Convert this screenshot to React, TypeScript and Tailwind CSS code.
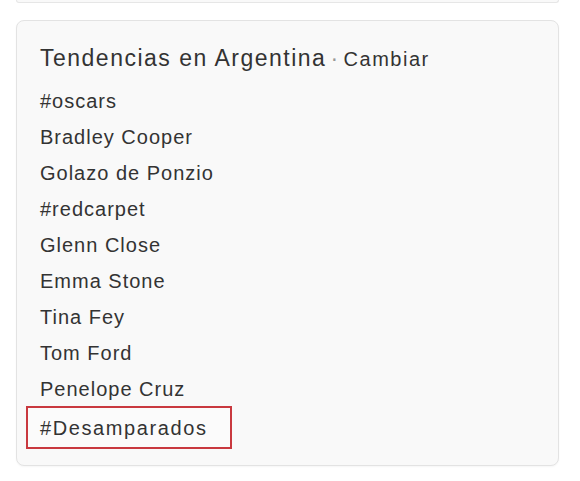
const trends = [
  "#oscars",
  "Bradley Cooper",
  "Golazo de Ponzio",
  "#redcarpet",
  "Glenn Close",
  "Emma Stone",
  "Tina Fey",
  "Tom Ford",
  "Penelope Cruz",
];

export default function App() {
  return (
    <div className="h-[481px] w-[580px] bg-white font-['Liberation_Sans',Arial,sans-serif] text-[#333]">
      {/* bottom edge of the card above */}
      <div className="ml-[16px] mr-[21px] h-[3px] rounded-b-lg border border-t-0 border-[#e6e6e6] bg-[#f9f9f9]" />

      <section className="ml-[16px] mr-[21px] mt-[17px] h-[446px] rounded-lg border border-[#e3e3e3] bg-[#f9f9f9] pl-[23px] pt-[19px] shadow-[0_1px_2px_rgba(0,0,0,0.04)]">
        <h2 className="flex items-baseline text-[23px] leading-[36px] tracking-[1.5px] font-normal">
          Tendencias en Argentina
          <span className="mx-[4px] text-[#999]">·</span>
          <span className="text-[20px] tracking-[1.5px] text-[#333]">Cambiar</span>
        </h2>

        <ul className="mt-[6px]">
          {trends.map((t) => (
            <li key={t} className="text-[20px] leading-[36px] tracking-[1px]">
              {t}
            </li>
          ))}
          <li className="-ml-[14px] -mt-[1px] flex h-[43px] w-[206px] items-center border-2 border-[#c9393f] bg-[#fbfbfb] pl-[12px] text-[20px] tracking-[1.6px]">
            #Desamparados
          </li>
        </ul>
      </section>
    </div>
  );
}
